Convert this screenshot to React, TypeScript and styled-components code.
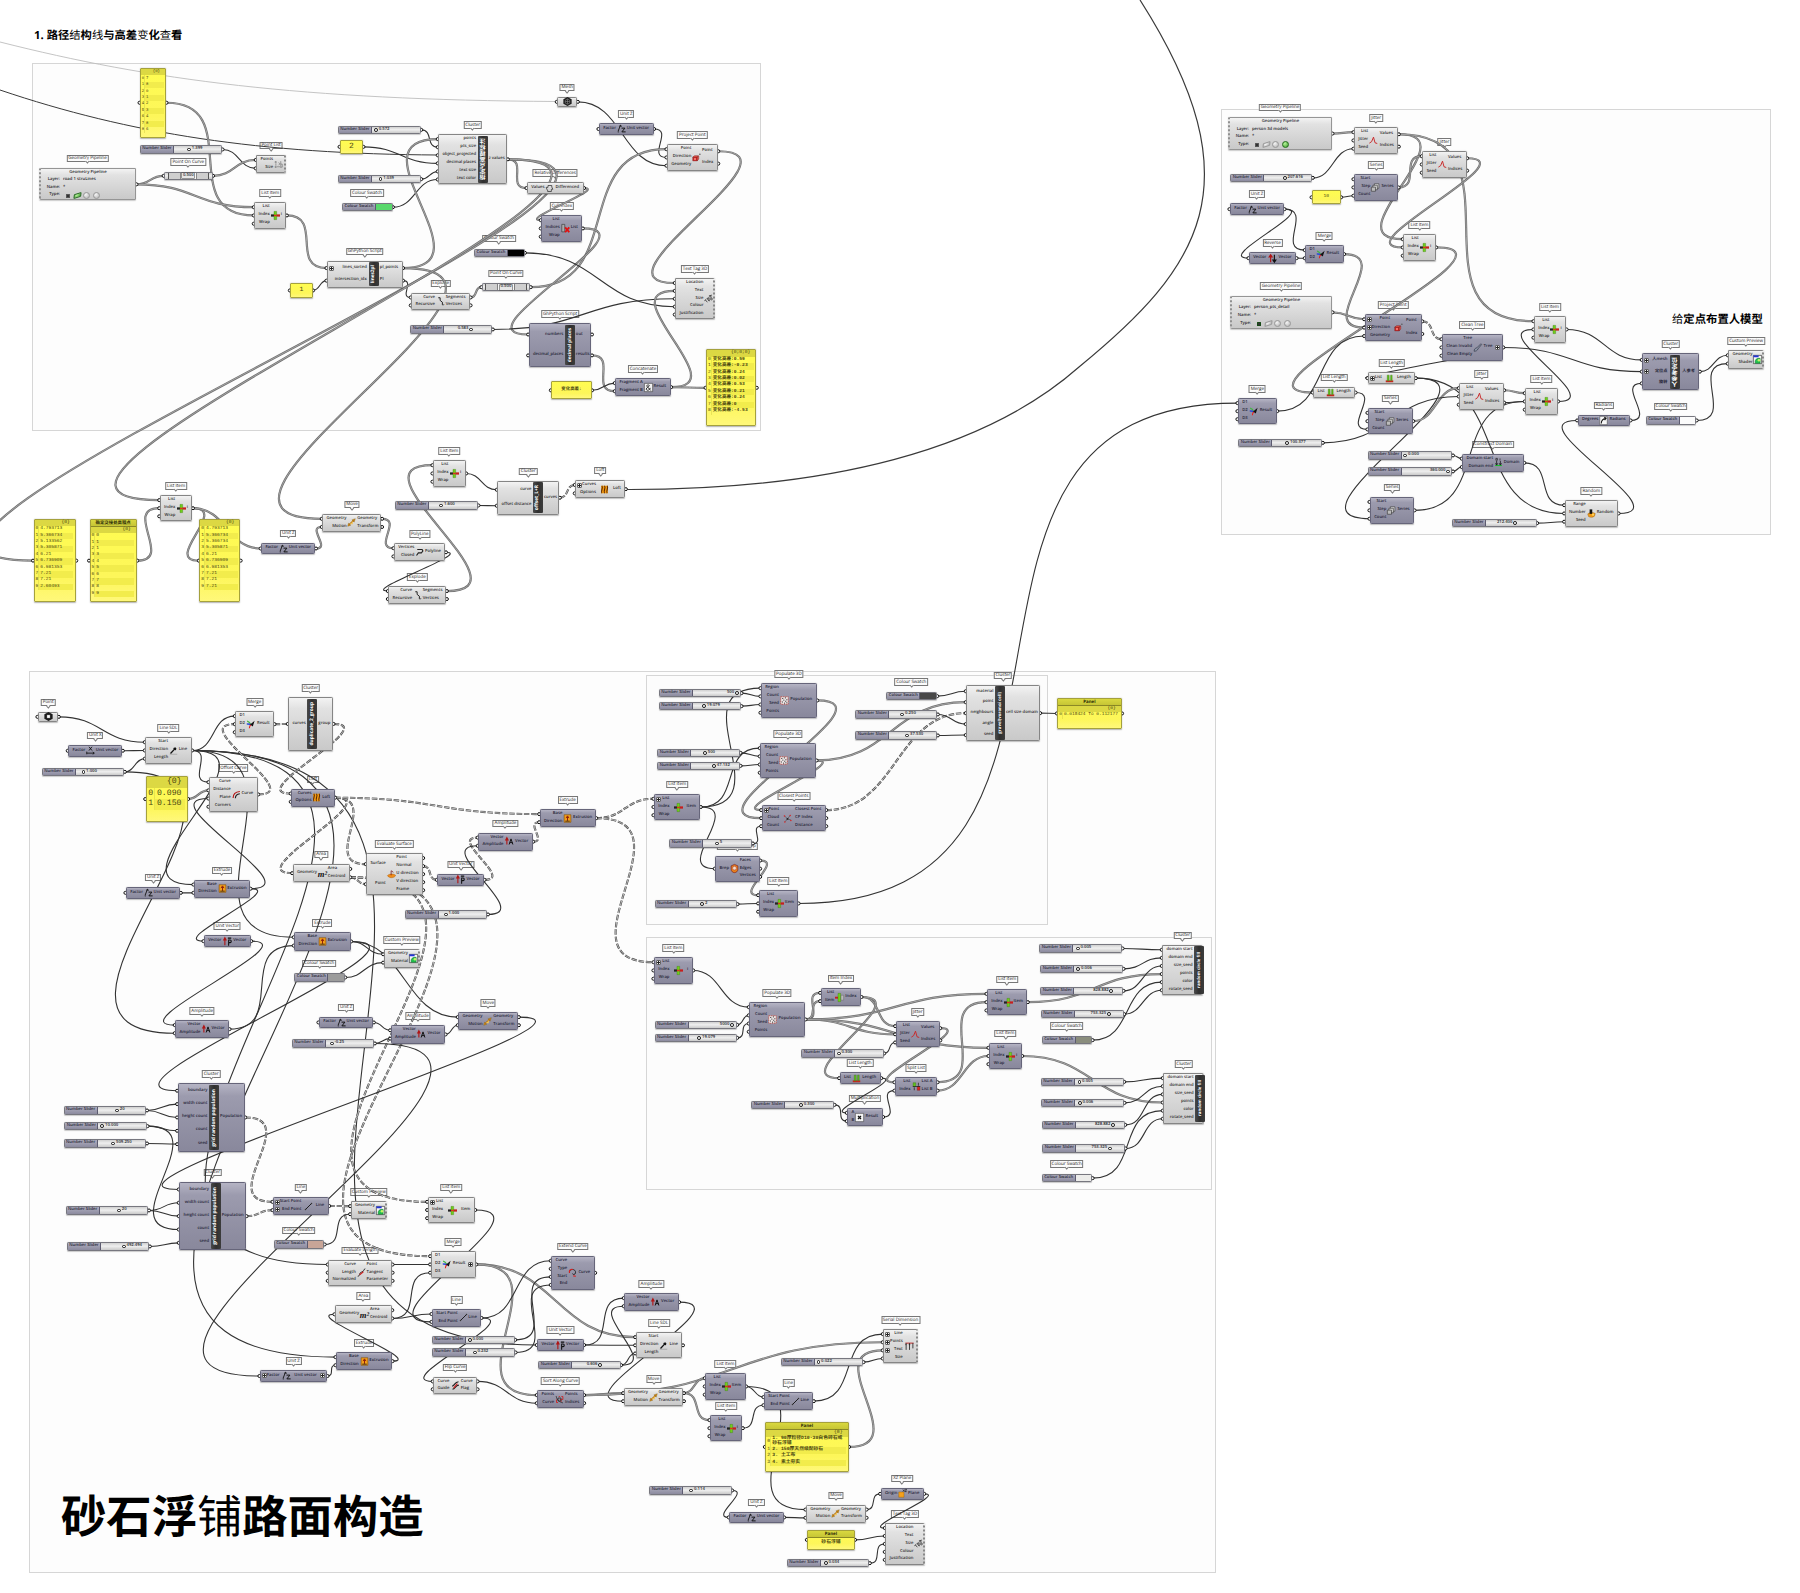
import React from 'react';
import styled, { createGlobalStyle, css } from 'styled-components';

/* ---------- types ---------- */

type Tone = 'L' | 'D';

interface Part {
  id: string;
  x: number;
  y: number;
  w: number;
  h: number;
  tone: Tone;
  ins: string[];
  outs: string[];
  icon: string;
  tag: string;
  strip?: string;
  sx?: number;
  jag?: boolean;
}
interface Slider { id: string; x: number; y: number; w: number; value: string; knob: number; left: boolean }
interface Swatch { id: string; x: number; y: number; color: string }
interface Panel {
  id: string; x: number; y: number; w: number; h: number;
  title?: string; path?: string; rows: string[]; size: number; pitch: number; center?: boolean;
}
interface Pipe { id: string; x: number; y: number; w: number; h: number; layer: string; on: number }
interface Box { x: number; y: number; w: number; h: number }

const split = (s: string) => (s ? s.split(',') : []);

const n = (
  id: string, tag: string, x: number, y: number, w: number, h: number, tone: Tone,
  ins: string, outs: string, icon: string, extra: Partial<Part> = {},
): Part => ({ id, tag, x, y, w, h, tone, ins: split(ins), outs: split(outs), icon, ...extra });

const s = (id: string, x: number, y: number, w: number, value: string, knob: number, left = false): Slider =>
  ({ id, x, y, w, value, knob, left });

/* ---------- data ---------- */

const LIW = 'List,Index,Wrap';

const parts: Part[] = [
  n('ptl', 'Point List', 256.3, 155, 29.5, 18.3, 'L', 'Points,Size', '', 'points', { jag: true }),
  n('li1', 'List Item', 254.3, 202.3, 32, 26.3, 'L', LIW, 'i', 'item'),
  n('py1', 'GhPython Script', 327, 261, 75.5, 26.7, 'L', '+lines_sorted,intersection_idx', 'pl_points,Pl', '', { strip: 'lines2pl', sx: 41 }),
  n('c1', 'Cluster', 438.3, 134.3, 69, 50, 'L', 'points,pts_size,object_projected,decimal places,text size,text color', 'z values', '', { strip: '指定点高程标注', sx: 37.3 }),
  n('rd', 'Relative Differences', 527, 182.3, 56.5, 11.5, 'L', 'Values', 'Differenced', 'cycle'),
  n('ci', 'Cull Index', 541.3, 215.3, 41, 26.3, 'D', 'List,Indices,Wrap', 'List', 'cull'),
  n('mesh', 'Mesh', 557.3, 97, 20, 9.7, 'L', ' ', ' ', 'hex'),
  n('uz1', 'Unit Z', 599, 123.3, 54.5, 11.4, 'D', 'Factor', 'Unit vector', 'unitz'),
  n('pp1', 'Project Point', 667, 144.3, 50.7, 26.3, 'L', 'Point,Direction,Geometry', 'Point,Index', 'project'),
  n('ex1', 'Explode', 411.3, 292.7, 58.7, 17.4, 'L', 'Curve,Recursive', 'Segments,Vertices', 'explode'),
  n('py2', 'GhPython Script', 528.7, 323.3, 62.7, 43.3, 'D', 'numbers,decimal_places', 'out,results', '', { strip: 'decimal places', sx: 33.5 }),
  n('cc', 'Concatenate', 615.3, 378.3, 55.3, 17.7, 'D', 'Fragment A,Fragment B', 'Result', 'amp'),
  n('tt1', 'Text Tag 3D', 675.3, 278.3, 39.3, 41, 'L', 'Location,Text,Size,Colour,Justification', '', 'tag', { jag: true }),
  n('li2', 'List Item', 159.8, 495.3, 32.6, 25.8, 'L', LIW, 'i', 'item'),
  n('uz2', 'Unit Z', 261.2, 542.7, 54.2, 11.6, 'D', 'Factor', 'Unit vector', 'unitz'),
  n('mv1', 'Move', 322.3, 514, 59.2, 17.8, 'L', 'Geometry,Motion', 'Geometry,Transform', 'move'),
  n('pl', 'PolyLine', 394, 543.3, 51.4, 18, 'L', 'Vertices,Closed', 'Polyline', 'poly'),
  n('ex2', 'Explode', 388.4, 586.3, 57.9, 17.5, 'L', 'Curve,Recursive', 'Segments,Vertices', 'explode'),
  n('li3', 'List Item', 433, 460.3, 32.6, 26.3, 'L', LIW, 'i', 'item'),
  n('c2', 'Cluster', 497.3, 481, 62, 33.5, 'L', 'curve,offset distance', 'curves', '', { strip: 'offset_L+R', sx: 33 }),
  n('lf1', 'Loft', 575.3, 480, 50, 18.3, 'L', '+Curves,Options', 'Loft', 'loft'),

  n('j1', 'Jitter', 1354, 127.3, 44.3, 26.3, 'L', 'List,Jitter,Seed', 'Values,Indices', 'jitter'),
  n('j2', 'Jitter', 1422.3, 151.3, 44.3, 26.3, 'L', 'List,Jitter,Seed', 'Values,Indices', 'jitter'),
  n('se1', 'Series', 1354, 174.3, 44, 26.3, 'D', 'Start,Step,Count', 'Series', 'series'),
  n('uz3', 'Unit Z', 1230, 203.3, 54, 11.7, 'D', 'Factor', 'Unit vector', 'unitz'),
  n('rev', 'Reverse', 1249, 252.3, 47, 11.7, 'D', 'Vector', 'Vector', 'reverse'),
  n('m1', 'Merge', 1305.3, 245.3, 38.3, 17.7, 'D', 'D1,D2', 'Result', 'merge'),
  n('li4', 'List Item', 1403.3, 234.3, 32.3, 26.3, 'L', LIW, 'i', 'item'),
  n('pp2', 'Project Point', 1364.7, 314.3, 57, 26.7, 'D', '+Point,+Direction,Geometry', 'Point,Index', 'project'),
  n('ct', 'Clean Tree', 1442, 334.3, 60.7, 26.3, 'D', 'Tree,Clean Invalid,Clean Empty', '+Tree', 'brush'),
  n('ll2', 'List Length', 1368, 372.3, 47.3, 11.7, 'L', '+List', 'Length', 'length'),
  n('ll1', 'List Length', 1313.3, 386.7, 41.7, 11.7, 'L', 'List', 'Length', 'length'),
  n('m2', 'Merge', 1238, 398.3, 38.7, 25.7, 'D', 'D1,D2,D3', 'Result', 'merge'),
  n('se2', 'Series', 1368, 408, 44.7, 26.3, 'D', 'Start,Step,Count', 'Series', 'series'),
  n('j3', 'Jitter', 1459.3, 383.3, 44.3, 26.3, 'L', 'List,Jitter,Seed', 'Values,Indices', 'jitter'),
  n('cd', 'Construct Domain', 1462.3, 453.7, 61.5, 18.3, 'D', 'Domain start,Domain end', 'Domain', 'domain'),
  n('se3', 'Series', 1370, 497, 44, 26.7, 'D', 'Start,Step,Count', 'Series', 'series'),
  n('li5', 'List Item', 1534, 316.3, 32, 26.3, 'L', LIW, 'i', 'item'),
  n('li6', 'List Item', 1525.3, 388.3, 32.3, 26.3, 'L', LIW, 'i', 'item'),
  n('rad', 'Radians', 1577.7, 414.7, 52.3, 11.5, 'D', 'Degrees', 'Radians', 'radians'),
  n('c3', 'Cluster', 1642.3, 353.3, 57, 36.7, 'D', '+人mesh,+定位点,旋转', '人参考', '', { strip: '人参考定位', sx: 26.4 }),
  n('cp1', 'Custom Preview', 1728.3, 350.3, 35.7, 18.3, 'L', 'Geometry,Shader', '', 'preview', { jag: true }),
  n('rn', 'Random', 1564.7, 500.3, 53.3, 26.3, 'L', 'Range,Number,Seed', 'Random', 'random'),

  n('pt', 'Point', 38, 712, 20.3, 9.7, 'L', ' ', ' ', 'hexp'),
  n('ux', 'Unit X', 68.3, 745, 54, 11.5, 'D', 'Factor', 'Unit vector', 'unitx'),
  n('ls', 'Line SDL', 145.3, 737.3, 46.3, 26.3, 'L', 'Start,Direction,Length', 'Line', 'sdl'),
  n('oc', 'Offset Curve', 209, 777.3, 48.7, 34.3, 'L', 'Curve,Distance,Plane,Corners', 'Curve', 'offset'),
  n('mg3', 'Merge', 235.3, 711.3, 38.7, 25.7, 'L', 'D1,D2,D3', 'Result', 'merge'),
  n('cl0', 'Cluster', 288.3, 697.3, 44.7, 53.3, 'L', 'curves', 'group', '', { strip: 'duplicate_2_group', sx: 17 }),
  n('lf2', 'Loft', 291.3, 788.7, 43.3, 18, 'D', 'Curves,Options', 'Loft', 'loft'),
  n('ar1', 'Area', 292.7, 864, 57, 18.3, 'L', 'Geometry', 'Area,Centroid', 'area'),
  n('uz4', 'Unit Z', 126, 887, 54.3, 11.7, 'D', 'Factor', 'Unit vector', 'unitz'),
  n('ex3', 'Extrude', 194, 879.7, 56, 18, 'D', 'Base,Direction', 'Extrusion', 'extrude'),
  n('uv1', 'Unit Vector', 204, 935.3, 46.7, 11.7, 'D', 'Vector', 'Vector', 'unitv'),
  n('ex4', 'Extrude', 294.3, 932.3, 56.3, 18.3, 'D', 'Base,Direction', 'Extrusion', 'extrude'),
  n('amp1', 'Amplitude', 175.3, 1020.3, 53.7, 17.7, 'D', 'Vector,Amplitude', 'Vector', 'ampl'),
  n('es', 'Evaluate Surface', 366.3, 853.3, 56.3, 41.7, 'L', 'Surface,Point', 'Point,Normal,U direction,V direction,Frame', 'surf'),
  n('uv2', 'Unit Vector', 437.3, 874, 46.7, 11.7, 'D', 'Vector', 'Vector', 'unitv'),
  n('amp2', 'Amplitude', 478.3, 832.7, 54.3, 18, 'D', 'Vector,Amplitude', 'Vector', 'ampl'),
  n('ex6', 'Extrude', 539.7, 809.3, 56, 17.7, 'D', 'Base,Direction', 'Extrusion', 'extrude'),
  n('cp2', 'Custom Preview', 383.7, 949.3, 36, 18.3, 'L', 'Geometry,Material', '', 'preview', { jag: true }),
  n('uz5', 'Unit Z', 319, 1016.7, 54.3, 11.5, 'D', 'Factor', 'Unit vector', 'unitz'),
  n('amp3', 'Amplitude', 390.7, 1025.3, 54.3, 18.3, 'D', 'Vector,Amplitude', 'Vector', 'ampl'),
  n('mv2', 'Move', 458.3, 1012.3, 60, 17.7, 'D', 'Geometry,Motion', 'Geometry,Transform', 'move'),
  n('cl1', 'Cluster', 177.7, 1083.3, 67, 68.3, 'D', 'boundary,width count,height count,count,seed', 'Population', '', { strip: 'grid random population', sx: 29.3 }),
  n('cl2', 'Cluster', 179.3, 1182, 66.7, 68.3, 'D', 'boundary,width count,height count,count,seed', 'Population', '', { strip: 'grid random population', sx: 29.3 }),
  n('ln1', 'Line', 273, 1197, 55.7, 18, 'D', '+Start Point,+End Point', 'Line', 'line'),
  n('cp3', 'Custom Preview', 350.7, 1201.3, 36, 17.7, 'L', 'Geometry,Material', '', 'preview', { jag: true }),
  n('el', 'Evaluate Length', 328.3, 1259.7, 63.7, 26, 'L', 'Curve,Length,Normalized', 'Point,Tangent,Parameter', 'evlen'),
  n('ar2', 'Area', 335, 1305.3, 56.7, 18, 'L', 'Geometry', 'Area,Centroid', 'area'),
  n('ex5', 'Extrude', 336, 1352.3, 56, 17.7, 'D', 'Base,Direction', 'Extrusion', 'extrude'),
  n('uz6', 'Unit Z', 260, 1370.3, 67, 11.4, 'D', '+Factor', '+Unit vector', 'unitz'),
  n('li7', 'List Item', 427.7, 1197, 47, 26, 'L', '+List,Index,Wrap', 'Item', 'item'),
  n('mg4', 'Merge', 430.7, 1251.3, 45, 26.3, 'L', 'D1,D2,D3', '+Result', 'merge'),
  n('ln2', 'Line', 432, 1309.3, 49, 17.3, 'D', 'Start Point,End Point', 'Line', 'line'),
  n('fc', 'Flip Curve', 433.3, 1376.7, 43.7, 17.3, 'L', 'Curve,Guide', 'Curve,Flag', 'flip'),
  n('ec', 'Extend Curve', 551.3, 1256, 43.3, 33.7, 'D', 'Curve,Type,Start,End', 'Curve', 'extend'),
  n('uv3', 'Unit Vector', 537.3, 1339.3, 46.3, 11.5, 'D', 'Vector', 'Vector', 'unitv'),
  n('amp4', 'Amplitude', 624.3, 1293.3, 54.3, 17.7, 'D', 'Vector,Amplitude', 'Vector', 'ampl'),
  n('ls2', 'Line SDL', 635.7, 1332.3, 46.7, 26, 'L', 'Start,Direction,Length', 'Line', 'sdl'),
  n('sac', 'Sort Along Curve', 537.3, 1390.3, 46.3, 17.7, 'D', 'Points,Curve', 'Points,Indices', 'sort'),
  n('mv3', 'Move', 623.7, 1388.3, 59.7, 17.7, 'L', 'Geometry,Motion', 'Geometry,Transform', 'move'),
  n('li10', 'List Item', 705.3, 1373.3, 40.3, 26.3, 'D', LIW, 'Item', 'item'),
  n('li11', 'List Item', 710, 1415.3, 32.3, 25.7, 'D', LIW, 'i', 'item'),
  n('ln3', 'Line', 764, 1392.3, 49.3, 17.7, 'D', 'Start Point,End Point', 'Line', 'line'),
  n('sd', 'Serial Dimension', 883.3, 1329.3, 34.5, 34, 'L', '+Line,+Points,+Text,Size', '', 'dim', { jag: true }),
  n('uz7', 'Unit Z', 729.3, 1511.7, 54.3, 11.4, 'D', 'Factor', 'Unit vector', 'unitz'),
  n('mv4', 'Move', 806, 1504.7, 60, 18, 'L', 'Geometry,Motion', 'Geometry,Transform', 'move'),
  n('xz', 'XZ Plane', 880.7, 1488, 43, 11.7, 'D', 'Origin', 'Plane', 'plane'),
  n('tt2', 'Text Tag 3D', 885.3, 1523.3, 39.3, 41.3, 'L', 'Location,Text,Size,Colour,Justification', '', 'tag', { jag: true }),

  n('pop1', 'Populate 3D', 761, 683.3, 55.7, 34.3, 'D', 'Region,Count,Seed,Points', 'Population', 'populate'),
  n('pop2', 'Populate 3D', 760.3, 743.3, 55.7, 34.3, 'D', 'Region,Count,Seed,Points', 'Population', 'populate'),
  n('li8', 'List Item', 654, 794, 46.3, 26, 'D', '+List,Index,Wrap', 'Item', 'item'),
  n('cpn', 'Closest Points', 761.7, 805.3, 64, 25.7, 'D', '+Point,Cloud,Count', 'Closest Point,CP Index,Distance', 'closest'),
  n('brep', 'Deconstruct Brep', 715.3, 855.7, 44.3, 26, 'D', 'Brep', 'Faces,Edges,Vertices', 'brep'),
  n('li12', 'List Item', 758.7, 890.3, 39.3, 26.3, 'D', LIW, 'Item', 'item'),
  n('cv', 'Cluster', 966.3, 685, 73.3, 56.3, 'L', 'material,point,neighbours,angle,seed', 'cell size domain', '', { strip: 'gravel(voronoi cell)', sx: 26.4 }),

  n('li9', 'List Item', 654, 957.3, 38.7, 26.3, 'D', '+List,Index,Wrap', 'i', 'item'),
  n('pop3', 'Populate 3D', 749.3, 1002.3, 55.7, 34.3, 'D', 'Region,Count,Seed,Points', 'Population', 'populate'),
  n('ii', 'Item Index', 820.7, 988, 40.3, 18, 'D', 'List,Item', 'Index', 'index'),
  n('j4', 'Jitter', 895.7, 1021.3, 44, 26, 'D', 'List,Jitter,Seed', 'Values,Indices', 'jitter'),
  n('ll3', 'List Length', 839.7, 1072.3, 41, 11.7, 'D', 'List', 'Length', 'length'),
  n('mul', 'Multiplication', 847.3, 1108, 35.3, 18, 'D', 'A,B', 'Result', 'mult'),
  n('sl', 'Split List', 895, 1077.3, 42, 18.3, 'D', 'List,Index', 'List A,List B', 'split'),
  n('li13', 'List Item', 987, 989, 40.3, 26.3, 'D', LIW, 'Item', 'item'),
  n('li14', 'List Item', 989, 1043, 32.7, 26, 'D', LIW, 'i', 'item'),
  n('rc1', 'Cluster', 1162.3, 945, 41, 50, 'L', 'domain start,domain end,size_seed,points,color,rotate_seed', '', '', { strip: 'random circle fill', sx: 28.6, jag: true }),
  n('rc2', 'Cluster', 1163.3, 1073.3, 41, 50.3, 'L', 'domain start,domain end,size_seed,points,color,rotate_seed', '', '', { strip: 'random circle fill', sx: 28.6, jag: true }),
];

const sliders: Slider[] = [
  s('s1', 140, 145.3, 82, '1.399', 189), s('s2', 338, 125.7, 82.7, '0.572', 376), s('s3', 338, 175, 82.7, '1.039', 380.5),
  s('s4', 410.3, 325.3, 82, '0.583', 471, true), s('s5', 394.9, 501.3, 83, '1.600', 441.2),
  s('s6', 1230.3, 173.7, 82, '207.616', 1284.7), s('s7', 1238.3, 438.7, 84, '100.377', 1287.3),
  s('s8', 1367.7, 451.3, 84.7, '0.000', 1405.3), s('s9', 1367.7, 467.3, 84.7, '360.000', 1448, true),
  s('s10', 1452, 519, 84.6, '212.400', 1515, true),
  s('s11', 42, 767.7, 82.3, '1.000', 83.3), s('s12', 404.7, 910.3, 82.7, '1.000', 445.7), s('s13', 292, 1039.3, 82.3, '-0.25', 331.7),
  s('s14', 63.7, 1106.3, 82.7, '20', 117), s('s15', 64.3, 1122, 82.7, '10.000', 102.3), s('s16', 63.7, 1139.3, 82.7, '509.250', 113.3),
  s('s17', 65.7, 1206.3, 82.7, '20', 119), s('s18', 67, 1242.3, 82.3, '492.494', 123.7),
  s('s19', 432, 1335.7, 82.7, '0.000', 469.7), s('s20', 432, 1348.3, 83, '0.232', 474.7), s('s21', 538.3, 1361, 82.3, '0.606', 600, true),
  s('s22', 781, 1358, 82, '0.022', 818.3), s('s23', 649.3, 1486.3, 82.3, '0.114', 691.3), s('s24', 787, 1559, 82.3, '0.034', 825.7),
  s('s25', 659, 689, 82, '500', 736.7, true), s('s26', 659, 702, 82, '19.079', 704), s('s27', 657.3, 748.7, 82.7, '500', 705),
  s('s28', 657.3, 761.7, 82.7, '47.132', 714), s('s29', 669.3, 839.3, 83, '5', 717), s('s30', 654.7, 900, 82.3, '2', 702.3),
  s('s31', 855.3, 710.3, 82, '0.250', 902.3), s('s32', 855.3, 731.3, 82, '37.530', 907.3),
  s('s33', 654.7, 1020.7, 82, '5000', 732, true), s('s34', 654.7, 1033.7, 82, '19.079', 699.3),
  s('s35', 801.3, 1049.3, 82.3, '0.300', 838.7), s('s36', 751.3, 1100.7, 82.7, '0.300', 801),
  s('s37', 1039.3, 944.3, 82.7, '0.005', 1077.7), s('s38', 1040.3, 964.7, 82.7, '0.006', 1078.3),
  s('s39', 1040.3, 986.7, 82.7, '828.882', 1111.3, true), s('s40', 1041, 1010, 82.7, '753.325', 1108.7, true),
  s('s41', 1041, 1077.7, 82.7, '0.005', 1079.3), s('s42', 1041.3, 1098.7, 82.7, '0.006', 1079.7),
  s('s43', 1042, 1120.7, 82.7, '828.882', 1113, true), s('s44', 1042.3, 1144.3, 82.7, '753.325', 1109.7, true),
];

const swatches: Swatch[] = [
  { id: 'w1', x: 342, y: 203, color: '#59d86c' },
  { id: 'w2', x: 474, y: 248.7, color: '#000000' },
  { id: 'w3', x: 1645.7, y: 416.3, color: '#fbfbfb' },
  { id: 'w4', x: 294.3, y: 973.3, color: '#9b9b9b' },
  { id: 'w5', x: 273.7, y: 1240.3, color: '#c8a597' },
  { id: 'w6', x: 886.3, y: 692, color: '#484848' },
  { id: 'w7', x: 1041.7, y: 1036, color: '#8a8d7d' },
  { id: 'w8', x: 1041.7, y: 1174, color: '#ececea' },
];

const knobs = [
  { id: 'k1', x: 164, y: 171.7, w: 48.5 },
  { id: 'k2', x: 481.7, y: 283, w: 48.5 },
];

const pipes: Pipe[] = [
  { id: 'g1', x: 39, y: 168.3, w: 97, h: 32, layer: 'road 1 struLines', on: 1 },
  { id: 'g2', x: 1228, y: 117.3, w: 104, h: 32.5, layer: 'person 3d models', on: 3 },
  { id: 'g3', x: 1230, y: 296, w: 102, h: 32.7, layer: 'person_pts_detail', on: 0 },
];

const panels: Panel[] = [
  { id: 'p1', x: 140, y: 68, w: 26, h: 69.5, path: '{0}', rows: ['7', '8', '0', '1', '2', '3', '4', '8', '6'], size: 4, pitch: 6.45 },
  { id: 'p2', x: 340, y: 140, w: 23, h: 13.7, rows: ['2'], size: 8, pitch: 9, center: true },
  { id: 'p3', x: 290.3, y: 283.3, w: 22.3, h: 14.3, rows: ['1'], size: 6.5, pitch: 9, center: true },
  { id: 'p4', x: 551.3, y: 381.3, w: 40.3, h: 18, rows: ['变化高差:'], size: 4.4, pitch: 9, center: true },
  { id: 'p5', x: 706, y: 349.3, w: 50.3, h: 77, path: '{0;0;0}', rows: ['变化高差:0.59', '变化高差:-0.23', '变化高差:0.24', '变化高差:0.02', '变化高差:0.53', '变化高差:0.21', '变化高差:0.24', '变化高差:0', '变化高差:-4.53'], size: 4.6, pitch: 6.45 },
  { id: 'p6', x: 33.5, y: 519, w: 42.3, h: 83.3, path: '{0}', rows: ['4.793713', '5.366734', '5.133562', '5.305871', '6.21', '6.736909', '6.981353', '7.21', '7.21', '2.60493'], size: 4.6, pitch: 6.4 },
  { id: 'p7', x: 89.5, y: 519, w: 47.3, h: 83.3, title: '确定交接处高程点', path: '{0}', rows: ['0', '1', '1', '3', '4', '5', '6', '7', '8', '9'], size: 4.6, pitch: 6.4 },
  { id: 'p8', x: 199.3, y: 519, w: 40.9, h: 83.3, path: '{0}', rows: ['4.793713', '5.366734', '5.366734', '5.305871', '6.21', '6.736909', '6.981353', '7.21', '7.21', '7.21'], size: 4.6, pitch: 6.4 },
  { id: 'p9', x: 1312, y: 190.3, w: 28.7, h: 14, rows: ['10'], size: 4.6, pitch: 9, center: true },
  { id: 'p10', x: 145.7, y: 775.7, w: 42, h: 46.7, path: '{0}', rows: ['0.090', '0.150'], size: 8.2, pitch: 10.6 },
  { id: 'p11', x: 765.3, y: 1422.3, w: 83.3, h: 49.3, title: 'Panel', path: '{0}', rows: ['1. 90厚粒径D10-30白色碎石或\n砂石浮铺', '2. 150厚天然级配砂石', '3. 土工布', '4. 素土夯实'], size: 4.8, pitch: 6.4 },
  { id: 'p12', x: 807.3, y: 1530, w: 47.3, h: 19.7, title: 'Panel', rows: ['砂石浮铺'], size: 4.8, pitch: 9, center: true },
  { id: 'p13', x: 1057.3, y: 698.3, w: 64.3, h: 30.3, title: 'Panel', path: '{0}', rows: ['0.018424 To 0.112177'], size: 4.5, pitch: 6.2 },
];

const groups: Box[] = [
  { x: 32, y: 63, w: 729, h: 368 },
  { x: 1221, y: 109, w: 550, h: 426 },
  { x: 29, y: 671, w: 1187, h: 902 },
  { x: 646, y: 675, w: 402, h: 250 },
  { x: 646, y: 937, w: 566, h: 253 },
];

/* "kind from:port>to:port"; s = single item, t = list, d = tree */
const wires = `
t p1>li1:1|s s1>ptl:1|t g1>k1|t g1>li1:0|t k1>ptl:0|t li1>py1:0|s p3>py1:1|s s2>c1:1|s p2>c1:3|s s3>c1:4|s w1>c1:5
t py1:0>c1:0|s py1:1>ex1:0|t py1:0>mv1:0|t c1>rd|t c1>p6|t c1>li2:0|t rd>ci:0|s mesh>pp1:2|s uz1>pp1:1|t ex1:0>k2|t k2>pp1:0
t pp1:0>tt1:0|t ci>py2:0|s w2>tt1:3|s s4>tt1:2|t py2:1>cc:1|s p4>cc:0|t cc>tt1:1|t cc>p5
t p7>li2:1|t li2>p8|t li2>uz2|t uz2>mv1:1|t mv1:0>pl:0|s pl>ex2:0|t ex2:0>li3:0|s li3>c2:0|s s5>c2:1|d c2>lf1:0
t g2>j1:0|s s6>j1:2|t j1:0>li4:0|t j1:0>li5:0|t se1>j2:0|s p9>se1:2|s uz3>rev|s uz3>m1:0|s rev>m1:1|t m1>pp2:1|t j2:0>li4:1
t li4>ll1|t g3>pp2:0|s m2>pp2:2|d pp2:0>ct:0|s ct>ll2|s ct>c3:1|s ll1>se2:2|s ll2>rn:1|s ll2>se3:2|t se2>j3:0|s s7>j3:1
t j3:0>li6:0|s j3:1>li6:1|s se3>li6:1|s li6>li5:1|s li5>c3:0|s s8>cd:0|s s9>cd:1|s cd>rn:0|s s10>rn:2|s rn>rad|s rad>c3:2|s c3>cp1:0|s w3>cp1:1
s pt>ls:0|s ux>ls:1|s s11>ls:2|s s11>amp1:1|s ls>mg3:0|s ls>oc:0|s ls>ex3:0|s ls>ex4:0|s ls>ex5:0|s ls>el:0|s ls>uv3:0
d oc>mg3:1|t p10>oc:1|s ex3>oc:2|s uz4>ex3:1|s ex3>uv1|s uv1>amp1:0|s amp1>ex4:1|s ex4>cl1:0|s ex4>cp2:0|s ex4>mv2:0|d mg3>cl0|d cl0>lf2:0
d lf2>ar1|d lf2>es:0|d lf2>ex6:0|d ar1:1>es:1|d ar1:1>li7:0|d ar1:1>mg4:0|d es:1>uv2|d uv2>amp2:0|s s12>amp2:1|d amp2>ex6:1
d ex6>li8:0|d ex6>li9:0|s uz5>amp3:0|s s13>amp3:1|s amp3>mv2:1|s mv2:0>cl2:0|s s13>uz6|s w4>cp2:1
s s14>cl1:1|s s14>cl1:2|s s15>cl1:3|s s15>cl2:3|s s16>cl1:4|s s17>cl2:1|s s17>cl2:2|s s18>cl2:4|d cl1>ln1:0|d cl2>ln1:1|d ln1>cp3:0|s w5>cp3:1
s ex5>ar2|s uz6>ex5:1|s ar2:1>ln2:0|s ar2:1>mg4:2|s el:0>mg4:1|s li7>ln2:1|t mg4>ls2:0|t mg4>sac:0|s ln2>ec:0|s ln2>fc:0|s s19>ec:2|s s20>ec:3
s fc:0>sac:1|s uv3>amp4:0|s uv3>ls2:1|s s21>amp4:1|s s21>ls2:2|s amp4>mv3:1|t sac:0>mv3:0|t sac:0>sd:1|t mv3:0>li10:0|t mv3:0>li11:0
s li10>ln3:0|s li10>mv4:0|s li11>ln3:1|s ln3>sd:0|s s22>sd:3|t p11>sd:2|s s23>uz7|s uz7>mv4:1|s mv4:0>xz|s xz>tt2:0|s p12>tt2:1|s s24>tt2:2
s li8>pop1:0|s li8>pop2:0|s li8>brep|s s25>pop1:1|s s26>pop1:2|s s27>pop2:1|s s28>pop2:2|t pop1>cpn:1|t pop2>cpn:0|t pop2>cv:1|d cpn:0>cv:2
s s29>cpn:2|t brep:0>li12:0|s s30>li12:1|s li12>m2:0|s w6>cv:0|s s31>cv:3|s s32>cv:4|s cv>p13
s li9>pop3:0|s s33>pop3:1|s s34>pop3:2|t pop3>ii:0|t pop3>ii:1|t pop3>j4:1|t pop3>li13:0|t pop3>li14:0|t ii>j4:0|t ii>ll3|s s35>j4:2|s ll3>mul:0
s s36>mul:1|s mul>sl:1|t j4:0>sl:0|t sl:0>li13:1|t sl:1>li14:1|t li13>rc1:3|t li14>rc2:3
s s37>rc1:0|s s38>rc1:1|s s39>rc1:2|s w7>rc1:4|s s40>rc1:5|s s41>rc2:0|s s42>rc2:1|s s43>rc2:2|s w8>rc2:4|s s44>rc2:5
`.trim().split(/[\n|]/);

/* ---------- port geometry ---------- */

type Pt = [number, number];
const inPorts: Record<string, Pt[]> = {};
const outPorts: Record<string, Pt[]> = {};
const BAR = 8.3;

parts.forEach((p) => {
  const at = (count: number, x: number): Pt[] =>
    Array.from({ length: count }, (_, i) => [x, p.y + 0.75 + ((i + 0.5) * (p.h - 1.5)) / count] as Pt);
  inPorts[p.id] = at(p.ins.length, p.x - 0.6);
  outPorts[p.id] = at(p.outs.length, p.x + p.w + 0.6);
});
sliders.forEach((q) => { outPorts[q.id] = [[q.x + q.w + 0.6, q.y + BAR / 2]]; });
swatches.forEach((q) => { outPorts[q.id] = [[q.x + 51, q.y + BAR / 2]]; });
knobs.forEach((q) => {
  inPorts[q.id] = [[q.x - 0.4, q.y + BAR / 2]];
  outPorts[q.id] = [[q.x + q.w + 0.6, q.y + BAR / 2]];
});
pipes.forEach((q) => { outPorts[q.id] = [[q.x + q.w + 0.5, q.y + q.h / 2]]; });
panels.forEach((q) => {
  inPorts[q.id] = [[q.x - 0.5, q.y + q.h / 2]];
  outPorts[q.id] = [[q.x + q.w + 0.5, q.y + q.h / 2]];
});

const curve = (a: Pt, b: Pt) => {
  const dx = b[0] - a[0];
  const dy = Math.abs(b[1] - a[1]);
  const c = Math.max(0.7 * dy, dx > 0 ? dx * 0.5 : 0);
  return `M${a[0]} ${a[1]}C${a[0] + c} ${a[1]} ${b[0] - c} ${b[1]} ${b[0]} ${b[1]}`;
};

const drawn = wires.map((w) => {
  const [kind, rest] = w.split(' ');
  const [from, to] = rest.split('>');
  const [fi, fp = '0'] = from.split(':');
  const [ti, tp = '0'] = to.split(':');
  return { key: w, kind, d: curve(outPorts[fi][+fp], inPorts[ti][+tp]) };
});

/* ---------- styles ---------- */

const Global = createGlobalStyle`
  html, body { margin: 0; background: #fff; }
`;

const sans = `'Open Sans', 'Noto Sans', 'Noto Sans CJK SC', sans-serif`;

const Canvas = styled.main`
  position: relative;
  width: 1800px;
  height: 1593px;
  overflow: hidden;
  background: #fff;
  font: 600 4.2px/1 ${sans};
  color: #26262b;
  white-space: nowrap;
  text-rendering: geometricPrecision;
`;

const place = css<{ $b: Box }>`
  position: absolute;
  box-sizing: border-box;
  left: ${(p) => p.$b.x}px;
  top: ${(p) => p.$b.y}px;
  width: ${(p) => p.$b.w}px;
  height: ${(p) => p.$b.h}px;
`;

const Group = styled.section`
  ${place}
  border: 1px solid #d6d6d6;
  background: rgba(251, 251, 251, 0.4);
`;

const Layer = styled.svg`
  position: absolute;
  inset: 0;
  fill: none;
`;

const Tag = styled.div<{ $x: number; $y: number }>`
  position: absolute;
  left: ${(p) => p.$x}px;
  top: ${(p) => p.$y}px;
  transform: translateX(-50%);
  display: flex;
  align-items: center;
  box-sizing: border-box;
  height: 7.6px;
  padding: 0 0.8px;
  border: 1px solid #777;
  background: #fbfbfb;
  color: #222;
  font-size: 4.5px;
  font-weight: 500;
  &::after {
    content: '';
    position: absolute;
    left: calc(50% - 1.6px);
    bottom: -2.4px;
    width: 2.2px;
    height: 2.2px;
    background: #fbfbfb;
    border: solid #777;
    border-width: 0 1px 1px 0;
    transform: rotate(45deg);
  }
`;

const light = 'linear-gradient(#f3f3f3, #e2e2e2 20%, #c9c9c9)';
const dark = 'linear-gradient(#b5b4c4, #9c9bae 18%, #89889c)';

const Body = styled.div<{ $b: Box; $tone: Tone; $jag?: boolean }>`
  ${place}
  display: flex;
  justify-content: space-between;
  align-items: stretch;
  padding: 0.25px ${(p) => (p.$jag ? 1 : 3.4)}px 0.25px 3.2px;
  border: 1px solid ${(p) => (p.$tone === 'D' ? '#66657a' : '#858585')};
  border-radius: 1.2px;
  background: ${(p) => (p.$tone === 'D' ? dark : light)};
  color: ${(p) => (p.$tone === 'D' ? '#262638' : '#2f2f2f')};
  box-shadow: 0 0.8px 1.2px rgba(0, 0, 0, 0.25);
  ${(p) => p.$jag && css`border-right: 2px dotted #888;`}
`;

const Ports = styled.div<{ $w?: number }>`
  display: flex;
  flex-direction: column;
  ${(p) => (p.$w ? `flex: 0 0 ${p.$w - 5.4}px;` : '')}
`;

const Port = styled.span<{ $end?: boolean }>`
  flex: 1;
  display: flex;
  align-items: center;
  gap: 1px;
  justify-content: ${(p) => (p.$end ? 'flex-end' : 'flex-start')};
`;

const Grow = styled.i`
  flex: 1;
`;

const Plus = styled.i`
  flex: 0 0 5px;
  box-sizing: border-box;
  width: 5px;
  height: 5px;
  margin: 0 -2.2px;
  border: 1px solid #666;
  border-radius: 1px;
  background:
    linear-gradient(#222, #222) center / 3px 1px no-repeat,
    linear-gradient(#222, #222) center / 1px 3px no-repeat,
    #eee;
`;

const Strip = styled.div<{ $s: number }>`
  flex: 0 0 10px;
  display: flex;
  align-items: center;
  justify-content: center;
  margin: 0.2px 1px 0.2px 1.6px;
  border-radius: 1px;
  background: linear-gradient(90deg, #4a4a4a, #2f2f2f 50%, #3c3c3c);
  color: #fff;
  span {
    writing-mode: vertical-rl;
    transform: rotate(180deg);
    font-size: ${(p) => p.$s}px;
    font-weight: 700;
  }
`;

const IconBox = styled.svg`
  flex: 0 0 9px;
  width: 9px;
  height: 9px;
  align-self: center;
  margin: -1px 0.8px;
  overflow: visible;
`;

const Bar = styled.div<{ $b: Box }>`
  ${place}
  display: flex;
  align-items: stretch;
  border: 1px solid #77777f;
  border-radius: 1.2px;
  background: linear-gradient(#d0d0d0, #efefef 45%, #c9c9c9);
  box-shadow: 0 0.6px 1px rgba(0, 0, 0, 0.2);
`;

const BarName = styled.div`
  flex: 0 0 33px;
  box-sizing: border-box;
  display: flex;
  align-items: center;
  justify-content: center;
  border-right: 1px solid #5c5b70;
  background: linear-gradient(#afaebf, #8c8b9f);
  color: #262633;
`;

const Before = styled.div<{ $w: number }>`
  flex: 0 0 ${(p) => p.$w}px;
  display: flex;
  align-items: center;
  justify-content: flex-end;
  padding-right: 0.8px;
  box-sizing: border-box;
`;

const Grip = styled.i`
  align-self: center;
  box-sizing: border-box;
  width: 3.8px;
  height: 3.8px;
  border: 1px solid #111;
  border-radius: 50%;
  background: #fff;
`;

const After = styled.div`
  display: flex;
  align-items: center;
  padding-left: 0.8px;
`;

const Fill = styled.div<{ $c: string }>`
  flex: 1;
  background: ${(p) => p.$c};
`;

const KnobTrack = styled.div`
  flex: 1;
  display: flex;
  align-items: center;
  justify-content: center;
  margin: 0 2.6px;
  border: solid #555;
  border-width: 0 1px;
  background: linear-gradient(90deg, #cfcfcf 28%, #666 29%, #f7f7f7 31%, #f7f7f7 69%, #666 71%, #cfcfcf 72%);
`;

const KnobValue = styled.span`
  padding: 0.4px 0.5px;
  background: #e6e6e6;
  box-shadow: 0 0 0 0.6px #555;
`;

const PipeBody = styled.div<{ $b: Box }>`
  ${place}
  display: flex;
  flex-direction: column;
  border: 1px solid #959595;
  border-left: 2px dotted #909090;
  border-radius: 1.2px;
  background: ${light};
  box-shadow: 0 0.8px 1.2px rgba(0, 0, 0, 0.2);
`;

const PipeTitle = styled.div`
  flex: 1;
  display: flex;
  align-items: center;
  justify-content: center;
`;

const PipeRow = styled.div`
  flex: 1;
  display: grid;
  grid-template-columns: 19px auto;
  column-gap: 3px;
  align-items: center;
  b { text-align: right; font-weight: 600; }
`;

const Types = styled.span`
  display: flex;
  gap: 2.6px;
  padding-left: 1px;
  align-items: center;
`;

const Dot = styled.i<{ $on: boolean; $k: number }>`
  box-sizing: border-box;
  width: ${(p) => (p.$k === 0 ? 4 : 7)}px;
  height: ${(p) => (p.$k === 0 ? 4 : p.$k === 1 ? 5 : 7)}px;
  margin: 0 ${(p) => (p.$k === 0 ? 1.5 : 0)}px;
  border-radius: ${(p) => (p.$k === 0 ? 0.5 : p.$k === 1 ? 1 : 5)}px;
  transform: ${(p) => (p.$k === 1 ? 'skewX(-25deg) rotate(-20deg)' : 'none')};
  border: 1px solid ${(p) => (p.$k === 0 ? (p.$on ? '#174a17' : '#555') : p.$on ? '#236b1c' : '#999')};
  background: ${(p) => (p.$k === 0
    ? '#333'
    : p.$on
      ? 'radial-gradient(circle at 35% 30%, #b6f59a, #3f9e2e)'
      : 'radial-gradient(circle at 35% 30%, #f5f5f5, #b0b0b0)')};
`;

const PanelBody = styled.div<{ $b: Box; $s: number }>`
  ${place}
  display: flex;
  flex-direction: column;
  border: 1px solid #a5a13c;
  border-radius: 1px;
  background: linear-gradient(#fffc50, #fdf65a 70%, #fff87a);
  box-shadow: 0 0.8px 1.4px rgba(0, 0, 0, 0.3);
  font: 400 ${(p) => p.$s}px/1 'Liberation Mono', 'Noto Sans CJK SC', monospace;
  color: #4a4712;
`;

const PanelTitle = styled.div`
  flex: 0 0 7px;
  box-sizing: border-box;
  display: flex;
  align-items: center;
  justify-content: center;
  border-bottom: 1px solid #8c8926;
  background: linear-gradient(#d9d83f, #c6c536);
  font: 700 4.4px/1 ${sans};
  color: #2c2b08;
`;

const PanelPath = styled.div<{ $h: number }>`
  flex: 0 0 ${(p) => p.$h}px;
  display: flex;
  align-items: center;
  justify-content: flex-end;
  padding-right: 5px;
  background: #dcd843;
`;

const PanelRow = styled.div<{ $h: number; $odd: boolean; $lines: number; $bold: boolean }>`
  flex: 0 0 ${(p) => p.$h * (p.$lines > 1 ? 1.65 : 1)}px;
  display: flex;
  align-items: center;
  gap: 0.2em;
  padding: 0 1.5px 0 0.2em;
  span {
    flex: 1;
    align-self: stretch;
    display: flex;
    align-items: center;
    padding-left: 0.25em;
    box-shadow: -0.5px 0 #d5cf45;
    background: ${(p) => (p.$odd ? '#f2ec4c' : 'transparent')};
    white-space: pre;
    font-weight: ${(p) => (p.$bold ? 700 : 400)};
  }
`;

const PanelCenter = styled.div<{ $bold: boolean }>`
  flex: 1;
  display: flex;
  align-items: center;
  justify-content: center;
  font-weight: ${(p) => (p.$bold ? 700 : 400)};
`;

const Note = styled.h2<{ $x: number; $y: number; $s: number }>`
  position: absolute;
  left: ${(p) => p.$x}px;
  top: ${(p) => p.$y}px;
  margin: 0;
  font: 700 ${(p) => p.$s}px/1.2 ${sans};
  color: #000;
  span { font-weight: 400; }
`;

/* ---------- icons ---------- */

const icons: Record<string, React.ReactNode> = {
  item: (<><path d="M0 9h9v6H0z" fill="#222" /><path d="M12 9h12v6H12z" fill="#c81e1e" /><path d="M8 1h7v22H8z" fill="#6fd01c" stroke="#3a7a10" strokeWidth="1" /><path d="M8 10h7v4H8z" fill="#e0301e" /></>),
  unitz: (<><path d="M3 19 9 4M6 6l4-3 1 5M2 21h3" stroke="#111" strokeWidth="2.4" fill="none" /><path d="M12 11h9l-8 10h10" stroke="#111" strokeWidth="2.6" fill="none" /></>),
  unitx: (<><path d="m8 2 8 10M16 2 8 12" stroke="#111" strokeWidth="2.4" /><path d="M2 19h20M18 16l4 3-4 3M2 15v7" stroke="#111" strokeWidth="2.2" fill="none" /></>),
  unitv: (<><path d="M5 22V5M2 8l3-6 3 6z" stroke="#b01515" strokeWidth="3" fill="#b01515" /><path d="M15 23V8h4c4 0 4 7 0 7h-3M13 3h9" stroke="#111" strokeWidth="2.8" fill="none" /></>),
  ampl: (<><path d="M5 20V5M2 8l3-6 3 6z" stroke="#b01515" strokeWidth="3" fill="#b01515" /><path d="m11 20 5-15 5 15M13 15h7" stroke="#111" strokeWidth="2.6" fill="none" /></>),
  reverse: (<><path d="M7 22V6M3 8l4-6 4 6z" stroke="#b01515" strokeWidth="3" fill="#b01515" /><path d="M17 2v16M13 16l4 6 4-6z" stroke="#111" strokeWidth="3" fill="#111" /></>),
  merge: (<><path d="M3 3c6 1 8 5 10 9" stroke="#3db83d" strokeWidth="3" fill="none" /><path d="M2 11c5-1 8 0 11 2" stroke="#2b48d8" strokeWidth="4" fill="none" /><path d="M9 22c0-4 2-8 5-10" stroke="#e32222" strokeWidth="3" fill="none" /><path d="m11 12 12-10-5 15z" fill="#111" /></>),
  jitter: <path d="M1 19 7 15 12 3l4 15 6 2" stroke="#c92a2a" strokeWidth="2.6" fill="none" />,
  series: (<><path d="M9 2h12v12H9z" fill="#ddd" stroke="#333" strokeWidth="1.6" /><path d="M5 6h12v12H5z" fill="#cfcfcf" stroke="#333" strokeWidth="1.6" /><path d="M1 11h11v11H1z" fill="#bbb" stroke="#333" strokeWidth="1.6" /></>),
  move: (<><path d="m2 22 8-3-6-5zM22 2l-9 3 6 6z" fill="#e29a1c" stroke="#6b4a10" /><path d="M5 18 18 6" stroke="#b57512" strokeWidth="3" /><path d="M9 15h5V9" stroke="#f2c55a" strokeWidth="3" fill="none" /></>),
  loft: (<><path d="M3 2h18v20H3z" fill="#f39c12" /><path d="M5 2c5 6-4 12 0 20M12 2c5 6-4 12 0 20M19 2c5 6-4 12 0 20" stroke="#5a2806" strokeWidth="2.8" fill="none" /></>),
  extrude: (<><path d="M3 2h18v20H3z" fill="#f5a11a" stroke="#7d4a05" strokeWidth="1.6" /><path d="M12 18V7M8 11l4-6 4 6" stroke="#8c1d0c" strokeWidth="2.6" fill="none" /><path d="M6 19h12" stroke="#111" strokeWidth="2" /></>),
  hex: (<><path d="m12 0 11 6v12l-11 6-11-6V6z" fill="#1c1c1c" /><path d="m12 5 6 4v7l-6 3-6-3V9zM12 5v14M6 12h12" stroke="#8b8b8b" strokeWidth="1.5" fill="none" /></>),
  hexp: (<><path d="m12 0 11 6v12l-11 6-11-6V6z" fill="#1c1c1c" /><path d="M8 8h8v8H8z" fill="#fff" stroke="#888" /></>),
  project: (<><path d="M2 11h12v10H2z" fill="#d02626" stroke="#6a0c0c" /><path d="m2 11 5-4h10l-3 4zM14 11l4-3v8l-4 5z" fill="#f0564a" stroke="#6a0c0c" /><circle cx="21" cy="3" r="2" fill="#555" /><circle cx="8" cy="16" r="2.4" fill="#ff9b8d" /></>),
  explode: <path d="M6 2h5v7l6 5v6c0 2 3 2 4 0" stroke="#111" strokeWidth="2.4" fill="none" />,
  poly: <path d="M4 20 9 13h8l4-5-2-4H6" stroke="#222" strokeWidth="3" fill="none" />,
  cycle: <path d="M3 9h5V4h10v4M21 14h-4v6H7v-4M3 9l3 7M21 14l-3-6" stroke="#333" strokeWidth="2" fill="none" />,
  cull: (<><path d="M2 1h8v20H2z" fill="#aaa" stroke="#333" strokeWidth="1.6" /><path d="m11 9 11 13M22 9 11 22" stroke="#e01010" strokeWidth="5" /></>),
  amp: (<><path d="M1 1h22v22H1z" fill="#f2f2f2" stroke="#333" strokeWidth="1.5" /><path d="M18 20 8 9c-2-4 5-6 6-2 0 3-8 5-8 9 0 5 8 5 11-3" stroke="#111" strokeWidth="2.2" fill="none" /></>),
  tag: <path d="m1 18 5-4M4 16l5 6M8 12l6 7-1-9zM14 8c5-4 7 0 4 2l5 3c-3 5-7 2-6-2M13 5l8-2" stroke="#222" strokeWidth="2" fill="none" />,
  points: <path d="M3 4h3v3H3zM3 17h3v3H3zM8 18h8M5 9v6M18 3v18M18 11h4v8h-4M12 7l4 3-4 4" stroke="#777" strokeWidth="1.8" fill="none" />,
  brush: <path d="M3 22c0-6 3-8 7-9l11-11 2 2-10 12c-1 4-5 6-10 6z" fill="#8f97a8" stroke="#2e3445" strokeWidth="1.8" />,
  length: (<><path d="M2 17h20v5H2z" fill="#c22a1c" /><path d="M6 3h5v15H6zM15 3h4v14h-4z" fill="#62c21c" stroke="#2f6b0c" /></>),
  domain: (<><path d="M3 20h18" stroke="#20c030" strokeWidth="3" /><path d="M7 8v10M17 8v10M4 14l3 5 3-5M14 14l3 5 3-5" stroke="#111" strokeWidth="2" fill="none" /><path d="M5 1h4v5H5zM16 1v6" stroke="#111" strokeWidth="1.6" fill="none" /></>),
  radians: (<><path d="M2 1h20v22H2z" fill="#f5f5f5" stroke="#444" strokeWidth="1.4" /><path d="M6 20c0-8 4-12 12-14M14 3l5 3-4 5" stroke="#111" strokeWidth="2.8" fill="none" /></>),
  preview: (<><path d="M1 1h22v22H1z" fill="#f6f6f6" stroke="#222" strokeWidth="1.6" /><path d="M1 1h14v5H1z" fill="#2334d6" /><path d="M6 22c-2-10 4-14 13-13v13z" fill="#23c44f" stroke="#0c6b26" strokeWidth="1.4" /><circle cx="16" cy="14" r="3.6" fill="#c9f06a" /></>),
  random: (<><path d="M2 13c4-4 14-5 20-1l-2 7c-5 4-12 4-16 1z" fill="#f09b1a" stroke="#7d4a05" /><path d="M7 1h7v12H7z" fill="#111" /><circle cx="16" cy="15" r="3" fill="#ffd35a" /></>),
  sdl: (<><path d="M4 20 18 5M18 5l-6 2M18 5l-1 6" stroke="#111" strokeWidth="3.4" fill="none" /><path d="M2 22h20" stroke="#888" strokeWidth="1.4" /></>),
  line: (<><path d="M4 20 20 4" stroke="#111" strokeWidth="2.4" /><circle cx="4" cy="20" r="2" fill="#333" /><circle cx="20" cy="4" r="2" fill="#333" /></>),
  offset: (<><path d="M3 21C3 11 9 5 21 4" stroke="#b51616" strokeWidth="3" fill="none" /><path d="M9 22c0-7 4-11 12-12" stroke="#222" strokeWidth="3" fill="none" /></>),
  area: <text x="12" y="20" textAnchor="middle" fontFamily="Liberation Serif, serif" fontWeight="700" fontStyle="italic" fontSize="23" fill="#111">m²</text>,
  surf: (<><path d="M1 15c4-5 16-6 22-1-2 8-17 9-22 1z" fill="#f08c1a" stroke="#93500a" /><path d="M11 14V2l6 4" stroke="#7b1d1d" strokeWidth="2" fill="none" /></>),
  evlen: (<><path d="M2 22c9-2 2-9 10-11S16 4 22 2" stroke="#222" strokeWidth="2.6" fill="none" /><path d="m7 18 10-8" stroke="#c22" strokeWidth="3" /></>),
  flip: (<><path d="M3 14C11 12 9 3 20 2M4 22c8-2 7-10 17-11" stroke="#222" strokeWidth="3.2" fill="none" /><path d="M7 19 17 7" stroke="#c22" strokeWidth="3.4" /></>),
  extend: (<><path d="M4 13C2 1 22 1 20 13c-1 6-8 5-8 2" stroke="#222" strokeWidth="2.4" fill="none" /><path d="M4 13C2 5 9 2 13 4" stroke="#d22" strokeWidth="3" fill="none" /><path d="m14 21 7 1" stroke="#d22" strokeWidth="3" /></>),
  sort: (<><path d="M3 3c3 12 8 15 18 18" stroke="#222" strokeWidth="2" fill="none" /><path d="M10 4h3M17 4h4v8h-4M4 12v8h4M14 10l3 8" stroke="#c22" strokeWidth="2.4" fill="none" /><path d="M8 8h8v8H8z" stroke="#222" strokeWidth="1.8" fill="none" /></>),
  dim: (<><path d="M1 3h22" stroke="#b51616" strokeWidth="2.4" /><path d="M3 3v18M12 3v18M21 3v14M1 7h3M10 7h4" stroke="#222" strokeWidth="2.2" /></>),
  plane: (<><path d="M2 8h14v14H2z" fill="#f4a01c" stroke="#8a5506" /><path d="m13 1 5 6M18 1l-5 6M19 1h4l-4 6h4" stroke="#111" strokeWidth="1.8" fill="none" /></>),
  populate: (<><path d="M2 2h20v20H2z" fill="#ece6e6" stroke="#c0392b" strokeWidth="1.8" strokeDasharray="4 2" /><path d="M6 6.5h2.6M13 5h2.6M17 10h2.6M9 11h2.6M14 14h2.6M5 16h2.6M11 19h2.6M17 18h2.6" stroke="#222" strokeWidth="2.6" /></>),
  closest: (<><path d="m12 13-8-8M12 13l7-9M12 13 5 21M12 13l9 3" stroke="#444" strokeWidth="1.6" /><circle cx="12" cy="13" r="2.6" fill="#222" /><circle cx="4" cy="5" r="2" fill="#d22" /><circle cx="19" cy="4" r="2" fill="#d22" /><circle cx="5" cy="21" r="2" fill="#d22" /><circle cx="21" cy="17" r="2" fill="#d22" /></>),
  brep: (<><path d="M3 5 12 1l9 4v9c0 6-5 9-9 9s-9-3-9-9z" fill="#e8811a" stroke="#7b1d1d" strokeWidth="1.8" /><circle cx="12" cy="11" r="5" fill="#f2e2cf" stroke="#a33" strokeWidth="1.4" /></>),
  index: (<><path d="M0 10h8v5H0z" fill="#c81e1e" /><path d="M8 1h7v22H8z" fill="#6fd01c" stroke="#3a7a10" /><path d="M16 6h7v13h-7z" fill="#bbb" stroke="#555" /></>),
  mult: (<><path d="M1 1h22v22H1z" fill="#f5f5f5" stroke="#333" strokeWidth="1.4" /><path d="m8 8 8 8M16 8l-8 8" stroke="#111" strokeWidth="3.4" /></>),
  split: (<><path d="M3 2h7v10H3z" fill="#62c21c" stroke="#2f6b0c" /><path d="M14 12h7v10h-7z" fill="#d22" stroke="#7b1111" /><path d="M6 14v8M17 2v8M2 12h20" stroke="#222" strokeWidth="2" /></>),
};

const Icon = ({ kind }: { kind: string }) => (kind ? <IconBox viewBox="0 0 24 24" fill="none">{icons[kind]}</IconBox> : null);

/* ---------- pieces ---------- */

const bare = (t: string) => (t[0] === '+' ? t.slice(1) : t);
const hasHan = (t: string) => /[\u4e00-\u9fff]/.test(t);
const stripSize = (p: Part) => {
  const em = hasHan(p.strip!) ? 1.02 : 0.6;
  return Math.min(6, (p.h - 4) / (p.strip!.length * em));
};

const Component = ({ p }: { p: Part }) => {
  if (p.ins[0] === ' ') {
    return (
      <Body $b={p} $tone={p.tone}>
        <Grow /><Icon kind={p.icon} /><Grow />
      </Body>
    );
  }
  return (
    <Body $b={p} $tone={p.tone} $jag={p.jag}>
      <Ports $w={p.sx}>
        {p.ins.map((t, i) => (
          <Port key={i} $end>
            {t[0] === '+' && <><Plus /><Grow /></>}
            {bare(t)}
          </Port>
        ))}
      </Ports>
      {p.strip && <Strip $s={stripSize(p)}><span>{p.strip}</span></Strip>}
      <Icon kind={p.icon} />
      {p.outs.length > 0 && (
        <Ports>
          {p.outs.map((t, i) => (
            <Port key={i}>
              {bare(t)}
              {t[0] === '+' && <><Grow />&nbsp;&nbsp;<Plus /></>}
            </Port>
          ))}
        </Ports>
      )}
    </Body>
  );
};

const SliderBar = ({ q }: { q: Slider }) => (
  <Bar $b={{ ...q, h: BAR }}>
    <BarName>Number Slider</BarName>
    <Before $w={q.knob - q.x - 35.8}>{q.left && q.value}</Before>
    <Grip />
    <After>{!q.left && q.value}</After>
  </Bar>
);

const PanelView = ({ q }: { q: Panel }) => (
  <PanelBody $b={q} $s={q.size}>
    {q.title && <PanelTitle>{q.title}</PanelTitle>}
    {q.path && <PanelPath $h={q.size > 6 ? q.pitch + 1.2 : q.pitch}>{q.path}</PanelPath>}
    {q.center
      ? <PanelCenter $bold={hasHan(q.rows[0])}>{q.rows[0]}</PanelCenter>
      : q.rows.map((r, i) => (
        <PanelRow key={i} $h={q.pitch} $odd={i % 2 === 1} $lines={r.split('\n').length} $bold={hasHan(r)}>
          {i}<span>{r}</span>
        </PanelRow>
      ))}
  </PanelBody>
);

const Wires = () => (
  <Layer width="1800" height="1593" viewBox="0 0 1800 1593">
    <path d="M0 42C150 80 300 100 557 101.5" stroke="#bdbdbd" strokeWidth=".9" />
    <path d="M0 90C130 134 260 154 438 155" stroke="#3a3a3a" />
    <path d="M626 489.5C830 490 985 450 1079 367C1200 268 1258 185 1140 0" stroke="#3a3a3a" strokeWidth="1.2" />
    {drawn.map((w) => {
      if (w.kind === 's') return <path key={w.key} d={w.d} stroke="#333" strokeWidth="1.1" />;
      const dash = w.kind === 'd' ? '5.5 1.8' : undefined;
      return (
        <g key={w.key} strokeDasharray={dash}>
          <path d={w.d} stroke={dash ? '#4a4a4a' : '#6f6f6f'} strokeWidth={dash ? 2.1 : 2.2} />
          <path d={w.d} stroke={dash ? '#d8d8d8' : '#a3a3a3'} strokeWidth={dash ? 0.8 : 1} />
        </g>
      );
    })}
    <g fill="#fff" stroke="#111" strokeWidth="1">
      {[...Object.values(inPorts), ...Object.values(outPorts)].flat().map((c, i) => (
        <circle key={i} cx={c[0]} cy={c[1]} r="1.5" />
      ))}
    </g>
  </Layer>
);

const THIN = '结线变查给铺';
const mixed = (t: string) => [...t].map((c, i) => (THIN.includes(c) ? <span key={i}>{c}</span> : c));

export default function App() {
  return (
    <>
      <Global />
      <Canvas>
        {groups.map((g, i) => <Group key={i} $b={g} />)}
        <Note $x={34} $y={29} $s={11.3}>{mixed('1. 路径结构线与高差变化查看')}</Note>
        <Note $x={1672} $y={312.5} $s={11.35}>{mixed('给定点布置人模型')}</Note>
        <Note $x={61} $y={1490} $s={45.3}>{mixed('砂石浮铺路面构造')}</Note>

        {parts.map((p) => <Tag key={p.id} $x={p.x + p.w / 2} $y={p.y - 13.2}>{p.tag}</Tag>)}
        {swatches.map((q) => <Tag key={q.id} $x={q.x + 25} $y={q.y - 13.8}>Colour Swatch</Tag>)}
        {pipes.map((q) => <Tag key={q.id} $x={q.x + q.w / 2} $y={q.y - 13.6}>Geometry Pipeline</Tag>)}
        {knobs.map((q) => <Tag key={q.id} $x={q.x + q.w / 2} $y={q.y - 13.4}>Point On Curve</Tag>)}

        <Wires />

        {parts.map((p) => <Component key={p.id} p={p} />)}
        {pipes.map((q) => (
          <PipeBody key={q.id} $b={q}>
            <PipeTitle>Geometry Pipeline</PipeTitle>
            <PipeRow><b>Layer:</b>{q.layer}</PipeRow>
            <PipeRow><b>Name:</b>*</PipeRow>
            <PipeRow>
              <b>Type:</b>
              <Types>{[0, 1, 2, 3].map((k) => <Dot key={k} $k={k} $on={q.on === k} />)}</Types>
            </PipeRow>
          </PipeBody>
        ))}
        {sliders.map((q) => <SliderBar key={q.id} q={q} />)}
        {swatches.map((q) => (
          <Bar key={q.id} $b={{ x: q.x, y: q.y, w: 50.5, h: BAR }}>
            <BarName>Colour Swatch</BarName>
            <Fill $c={q.color} />
          </Bar>
        ))}
        {knobs.map((q) => (
          <Bar key={q.id} $b={{ ...q, h: BAR }}>
            <KnobTrack><KnobValue>0.500</KnobValue></KnobTrack>
          </Bar>
        ))}
        {panels.map((q) => <PanelView key={q.id} q={q} />)}
      </Canvas>
    </>
  );
}
